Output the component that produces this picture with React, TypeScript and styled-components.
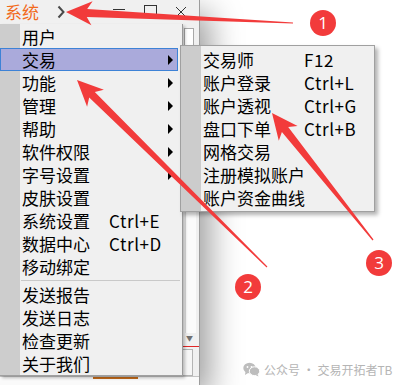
import React from 'react';
import styled, { createGlobalStyle } from 'styled-components';

const GlobalStyle = createGlobalStyle`
  html, body {
    margin: 0;
    padding: 0;
    background: #ffffff;
    overflow: hidden;
  }
  * { box-sizing: border-box; }
`;

const UI_FONT = `"Noto Sans CJK SC", "Noto Sans", sans-serif`;

type Item = { label: string; key?: string; sub?: boolean; active?: boolean; sep?: boolean };

const mainItems: Item[] = [
  { label: '用户' },
  { label: '交易', sub: true, active: true },
  { label: '功能', sub: true },
  { label: '管理', sub: true },
  { label: '帮助', sub: true },
  { label: '软件权限', sub: true },
  { label: '字号设置', sub: true },
  { label: '皮肤设置' },
  { label: '系统设置', key: 'Ctrl+E' },
  { label: '数据中心', key: 'Ctrl+D' },
  { label: '移动绑定' },
  { label: '', sep: true },
  { label: '发送报告' },
  { label: '发送日志' },
  { label: '检查更新' },
  { label: '关于我们' },
];

const tradeItems: Item[] = [
  { label: '交易师', key: 'F12' },
  { label: '账户登录', key: 'Ctrl+L' },
  { label: '账户透视', key: 'Ctrl+G' },
  { label: '盘口下单', key: 'Ctrl+B' },
  { label: '网格交易' },
  { label: '注册模拟账户' },
  { label: '账户资金曲线' },
];

// tail -> tip, tapered shaft with a slightly notched head
const arrowPoints = (
  tx: number, ty: number, hx: number, hy: number,
  head = 26, wing = 12, neck = 4, tail = 0.6,
) => {
  const dx = hx - tx;
  const dy = hy - ty;
  const len = Math.hypot(dx, dy);
  const ux = dx / len;
  const uy = dy / len;
  const nx = -uy;
  const ny = ux;
  const bx = hx - ux * head;
  const by = hy - uy * head;
  const kx = hx - ux * (head - 5);
  const ky = hy - uy * (head - 5);
  const pts = [
    [tx + nx * tail, ty + ny * tail],
    [kx + nx * neck, ky + ny * neck],
    [bx + nx * wing, by + ny * wing],
    [hx, hy],
    [bx - nx * wing, by - ny * wing],
    [kx - nx * neck, ky - ny * neck],
    [tx - nx * tail, ty - ny * tail],
  ];
  return pts.map((p) => p.map((v) => v.toFixed(1)).join(',')).join(' ');
};

const callouts = [
  { n: '1', arrow: [293, 23, 66, 12], cx: 323, cy: 23 },
  { n: '2', arrow: [267, 267, 77, 80], cx: 248, cy: 287 },
  { n: '3', arrow: [373, 240, 272, 113], cx: 379, cy: 263 },
];

function MenuList({ items, labelWidth }: { items: Item[]; labelWidth: number }) {
  return (
    <>
      {items.map((it, i) =>
        it.sep ? (
          <Separator key={i} />
        ) : (
          <Row key={i} $active={it.active} $labelWidth={labelWidth}>
            <span>{it.label}</span>
            <Shortcut>{it.key}</Shortcut>
            {it.sub ? <SubArrow /> : <span />}
          </Row>
        ),
      )}
    </>
  );
}

export default function App() {
  return (
    <Page>
      <GlobalStyle />
      <Window>
        <TitleBar>
          <Brand>系统</Brand>
          <svg width="8" height="14" viewBox="0 0 8 14">
            <path d="M1.5 1.5 L6.5 7 L1.5 12.5" fill="none" stroke="#4a4a4a" strokeWidth="2" />
          </svg>
          <Controls>
            <svg width="14" height="14" viewBox="0 0 14 14">
              <path d="M1 4.5 H13" stroke="#333" strokeWidth="1" />
            </svg>
            <svg width="15" height="15" viewBox="0 0 15 15">
              <rect x="1.5" y="0.5" width="12" height="12" fill="none" stroke="#333" strokeWidth="1" />
            </svg>
            <svg width="12" height="12" viewBox="0 0 12 12">
              <path d="M1 1 L11 11 M11 1 L1 11" stroke="#333" strokeWidth="1" />
            </svg>
          </Controls>
        </TitleBar>
        <Body>
          <Workspace />
          <SideStrip>
            <InputBox />
            <SidePanel />
            <DropMark>▼</DropMark>
            <RedRule />
            <FieldBox />
          </SideStrip>
        </Body>
        <TabBar>
          <ActiveTab />
        </TabBar>

        <MainMenu>
          <MenuList items={mainItems} labelWidth={87} />
        </MainMenu>
        <SubMenu>
          <MenuList items={tradeItems} labelWidth={101} />
        </SubMenu>
      </Window>

      <Watermark>
        <svg width="17" height="15" viewBox="0 0 17 15">
          <ellipse cx="6.5" cy="6" rx="6.2" ry="5.3" fill="#bdbdbd" />
          <path d="M2.5 9.5 L2 13 L5.5 10.8 Z" fill="#bdbdbd" />
          <ellipse cx="11.5" cy="9.2" rx="5.2" ry="4.4" fill="#bdbdbd" stroke="#fff" strokeWidth="1" />
          <path d="M14.5 12 L15.5 14.5 L12.5 13 Z" fill="#bdbdbd" />
          <circle cx="4.5" cy="5" r="0.9" fill="#fff" />
          <circle cx="8.5" cy="5" r="0.9" fill="#fff" />
        </svg>
        <span>公众号 · 交易开拓者TB</span>
      </Watermark>

      <Overlay width="401" height="385" viewBox="0 0 401 385">
        {callouts.map((c) => {
          const [tx, ty, hx, hy] = c.arrow;
          return (
            <g key={c.n}>
              <polygon points={arrowPoints(tx, ty, hx, hy)} fill="#f23b3b" />
              <circle cx={c.cx} cy={c.cy} r="13" fill="#f23b3b" />
              <text
                x={c.cx}
                y={c.cy + 6}
                textAnchor="middle"
                fontSize="17"
                fontFamily='"Open Sans", "DejaVu Sans", sans-serif'
                fill="#ffffff"
              >
                {c.n}
              </text>
            </g>
          );
        })}
      </Overlay>
    </Page>
  );
}

const Page = styled.div`
  position: relative;
  width: 401px;
  height: 385px;
  overflow: hidden;
  background: #ffffff;
  font-family: ${UI_FONT};
`;

const Window = styled.div`
  position: relative;
  width: 200px;
  height: 385px;
  display: flex;
  flex-direction: column;
  background: #f0f0f0;
  border-right: 1px solid #9c9c9c;
  box-shadow: 10px 12px 30px rgba(0, 0, 0, 0.38);
`;

const TitleBar = styled.div`
  height: 24px;
  display: flex;
  align-items: center;
  gap: 18px;
  padding: 0 12px 0 5px;
  background: #f0f0f0;
`;

const Brand = styled.span`
  font-size: 17px;
  line-height: 24px;
  color: #f26a1b;
`;

const Controls = styled.div`
  margin-left: auto;
  display: flex;
  align-items: center;
  gap: 17px;
`;

const Body = styled.div`
  flex: 1;
  display: grid;
  grid-template-columns: 1fr 17px;
`;

const Workspace = styled.div`
  background: #f0f0f0;
`;

const SideStrip = styled.div`
  display: flex;
  flex-direction: column;
  padding: 4px 0 0 0;
  border-left: 1px solid #a4a4a4;
`;

const InputBox = styled.div`
  height: 18px;
  margin: 0 5px 0 1px;
  border: 1px solid #a8a8a8;
  background: #ffffff;
`;

const SidePanel = styled.div`
  flex: 1;
  margin: 2px 3px 0 2px;
  background: #fbfbfb;
  border-left: 1px solid #dcdcdc;
`;

const DropMark = styled.div`
  height: 10px;
  font-size: 7px;
  line-height: 10px;
  color: #707070;
  padding-left: 3px;
`;

const RedRule = styled.div`
  height: 1px;
  margin-top: 3px;
  background: #e02626;
`;

const FieldBox = styled.div`
  height: 27px;
  margin: 2px 6px 0 0;
  border: 1px solid #b4b4b4;
  border-left: none;
  background: #f6f6f6;
`;

const TabBar = styled.div`
  height: 9px;
  display: flex;
  padding-left: 93px;
  border-top: 1px solid #c4c4c4;
  background: #fafafa;
`;

const ActiveTab = styled.div`
  width: 45px;
  height: 2px;
  background: #c46a1a;
`;

const MainMenu = styled.div`
  position: absolute;
  left: 0;
  top: 24px;
  width: 183px;
  padding: 1px 0 0;
  background: linear-gradient(to right, #cdcdcd 0 20px, #f0f0f0 20px);
  border-right: 1px solid #9a9a9a;
  border-bottom: 1px solid #a0a0a0;
  box-shadow: 2px 2px 3px rgba(0, 0, 0, 0.25);
`;

const SubMenu = styled.div`
  position: absolute;
  left: 180px;
  top: 45px;
  width: 195px;
  padding: 2px 0;
  background: linear-gradient(to right, #cccccc 0 20px, #f0f0f0 20px);
  border: 1px solid #a0a0a0;
  box-shadow: 3px 3px 4px rgba(0, 0, 0, 0.3);
`;

const Row = styled.div<{ $active?: boolean; $labelWidth: number }>`
  height: 23px;
  margin-right: 4px;
  display: grid;
  grid-template-columns: ${(p) => p.$labelWidth}px 1fr 10px;
  align-items: center;
  padding-left: 22px;
  font-size: 17px;
  line-height: 23px;
  color: #000000;
  white-space: nowrap;
  background: ${(p) => (p.$active ? '#aaaadb' : 'transparent')};
  outline: ${(p) => (p.$active ? '1px solid #3d82d6' : 'none')};
  outline-offset: -1px;
`;

const Shortcut = styled.span`
  letter-spacing: 0.6px;
`;

const SubArrow = styled.span`
  width: 0;
  height: 0;
  border-top: 5px solid transparent;
  border-bottom: 5px solid transparent;
  border-left: 5px solid #000000;
`;

const Separator = styled.div`
  height: 5px;
  margin: 0 2px 0 21px;
  display: flex;
  align-items: center;
  &::after {
    content: '';
    flex: 1;
    height: 1px;
    background: #c9c9c9;
  }
`;

const Watermark = styled.div`
  position: absolute;
  left: 243px;
  top: 361px;
  display: flex;
  align-items: center;
  gap: 4px;
  font-size: 12px;
  white-space: nowrap;
  color: #b5b5b5;
  font-family: ${UI_FONT};
`;

const Overlay = styled.svg`
  position: absolute;
  left: 0;
  top: 0;
  pointer-events: none;
`;
